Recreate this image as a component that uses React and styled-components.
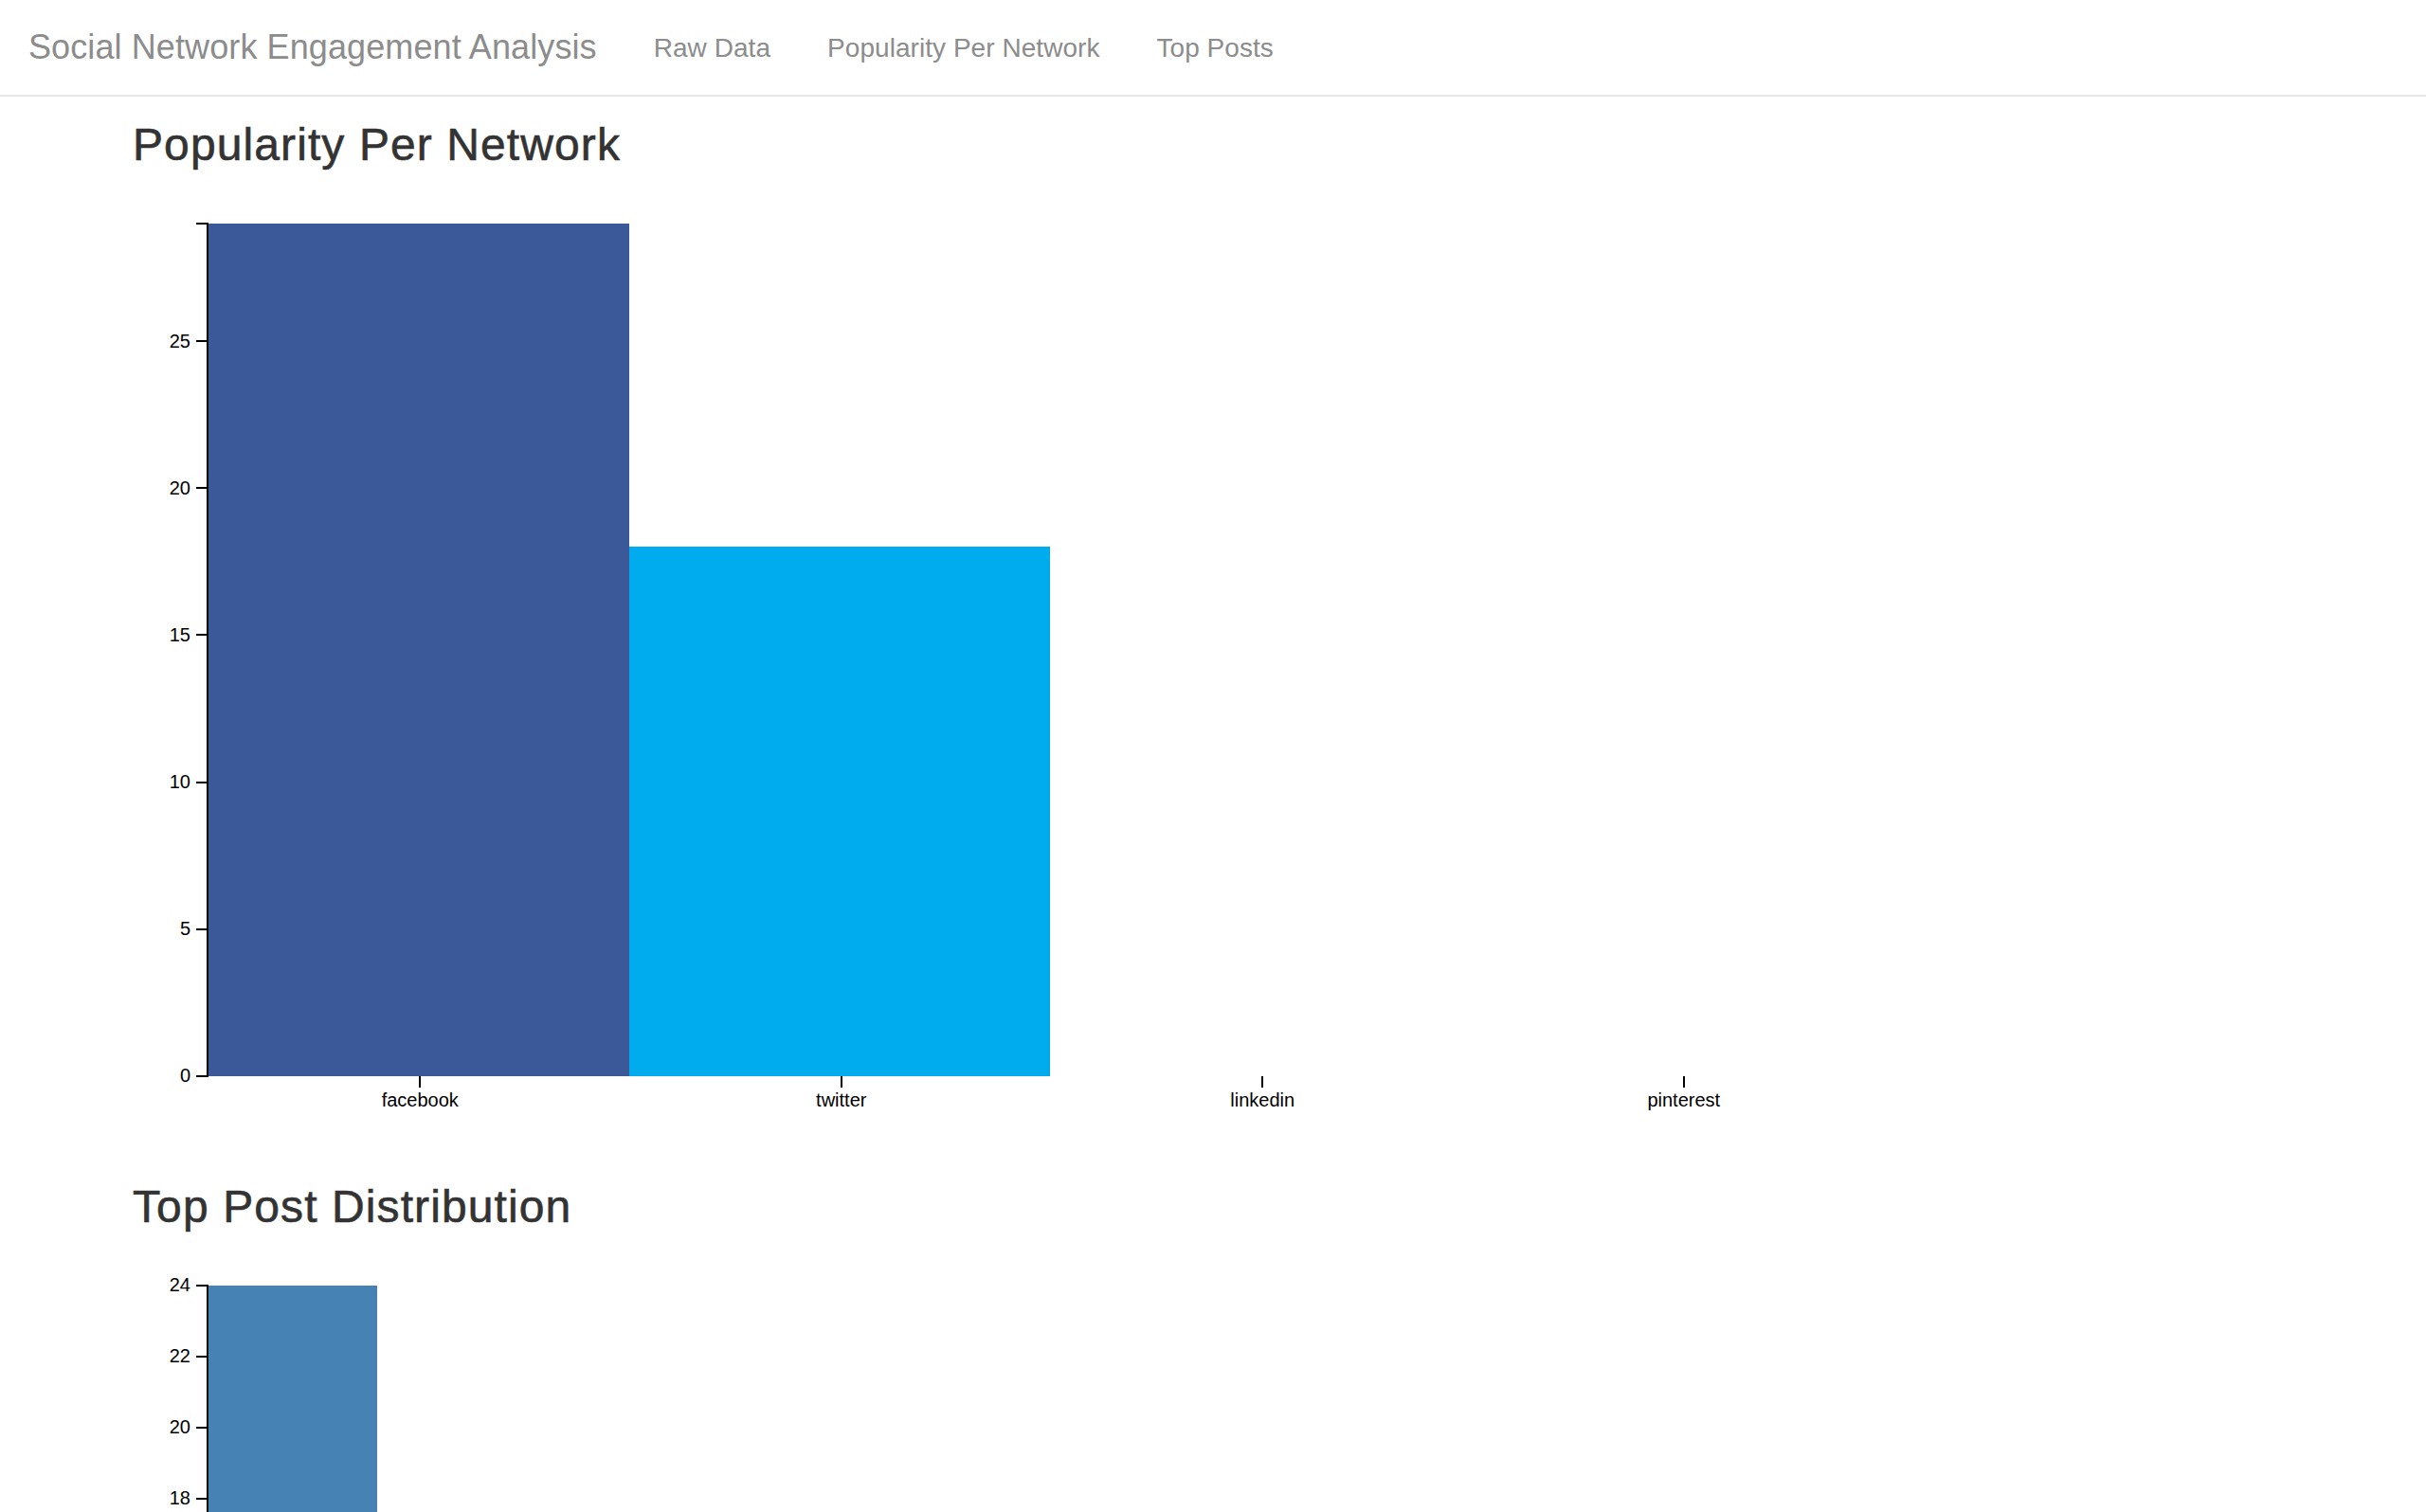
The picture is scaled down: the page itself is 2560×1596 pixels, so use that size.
import React from 'react';
import styled, { createGlobalStyle } from 'styled-components';

const GlobalStyle = createGlobalStyle`
  html, body {
    margin: 0;
    padding: 0;
    background: #fff;
  }
  body {
    font-family: "Liberation Sans", Helvetica, Arial, sans-serif;
    color: #333;
  }
`;

const Navbar = styled.nav`
  display: flex;
  align-items: flex-start;
  height: 100px;
  padding: 0 30px;
  border-bottom: 2px solid #e7e7e7;
  background: #fff;
`;

const Brand = styled.a`
  display: block;
  margin-left: -30px;
  padding: 30px;
  font-size: 36px;
  line-height: 40px;
  color: #8c8c8c;
  text-decoration: none;
  letter-spacing: 0.1px;
`;

const NavList = styled.ul`
  display: flex;
  margin: 0;
  padding: 0;
  list-style: none;
`;

const NavLink = styled.a`
  display: block;
  padding: 31px 30px 29px;
  font-size: 28px;
  line-height: 40px;
  color: #8c8c8c;
  text-decoration: none;
  letter-spacing: 0.05px;
`;

const Container = styled.main`
  display: flex;
  flex-direction: column;
  gap: 52px;
  padding: 25px 140px 0;
`;

const Section = styled.section`
  display: flex;
  flex-direction: column;
`;

const Heading = styled.h3`
  margin: 0 0 16px;
  font-size: 48px;
  line-height: 52.8px;
  font-weight: 500;
  color: #333;
  letter-spacing: 1.1px;
  -webkit-text-stroke: 0.6px #333;
`;

const ChartSvg = styled.svg`
  display: block;
  overflow: visible;
`;

const AxisPath = styled.path`
  fill: none;
  stroke: #000;
  stroke-width: 2px;
  shape-rendering: crispEdges;
`;

const TickLine = styled.line`
  stroke: #000;
  stroke-width: 2px;
  shape-rendering: crispEdges;
`;

const TickLabel = styled.text`
  font-family: "Liberation Sans", Helvetica, Arial, sans-serif;
  font-size: 20px;
  fill: #000;
`;

const Bar = styled.rect`
  fill: ${props => props.color};
  shape-rendering: crispEdges;
`;

const BarChart = ({ data, max, step, plotHeight, band, barWidth, left, tickLabels }) => {
  const y = v => plotHeight - (v / max) * plotHeight;
  const ticks = [];
  for (let v = 0; v <= max; v += step) ticks.push(v);
  const top = 40;

  return (
    <ChartSvg width={2280} height={top + plotHeight + 60}>
      <g transform={`translate(${left},${top})`}>
        {data.map((d, i) => (
          <Bar
            key={d.label}
            x={i * band}
            y={y(d.value)}
            width={barWidth}
            height={plotHeight - y(d.value)}
            color={d.color}
          />
        ))}
        <g>
          {ticks.map(v => (
            <g key={v} transform={`translate(0,${y(v)})`}>
              <TickLine x1={-12} x2={0} y1={0} y2={0} />
              <TickLabel x={-18} dy=".32em" textAnchor="end">{v}</TickLabel>
            </g>
          ))}
          <AxisPath d={`M-12,0H0V${plotHeight}H-12`} />
        </g>
        {tickLabels && (
          <g transform={`translate(0,${plotHeight})`}>
            {data.map((d, i) => (
              <g key={d.label} transform={`translate(${i * band + band / 2 + 2},0)`}>
                <TickLine x1={0} x2={0} y1={0} y2={12} />
                <TickLabel y={18} dy=".71em" textAnchor="middle">{d.label}</TickLabel>
              </g>
            ))}
          </g>
        )}
      </g>
    </ChartSvg>
  );
};

const networks = [
  { label: 'facebook', value: 29, color: '#3b5998' },
  { label: 'twitter', value: 18, color: '#00acee' },
  { label: 'linkedin', value: 0, color: '#007bb6' },
  { label: 'pinterest', value: 0, color: '#cb2027' },
];

const distribution = [24, 11, 6, 4, 3, 2, 1, 1, 0, 1].map((value, i) => ({
  label: String(i + 1),
  value,
  color: 'steelblue',
}));

const App = () => (
  <>
    <GlobalStyle />
    <Navbar>
      <Brand href="#">Social Network Engagement Analysis</Brand>
      <NavList>
        <li><NavLink href="#raw">Raw Data</NavLink></li>
        <li><NavLink href="#popularity">Popularity Per Network</NavLink></li>
        <li><NavLink href="#top">Top Posts</NavLink></li>
      </NavList>
    </Navbar>
    <Container>
      <Section id="popularity">
        <Heading>Popularity Per Network</Heading>
        <BarChart
          data={networks}
          max={29}
          step={5}
          plotHeight={900}
          band={444.5}
          barWidth={444.5}
          left={79}
          tickLabels
        />
      </Section>
      <Section id="top">
        <Heading>Top Post Distribution</Heading>
        <BarChart
          data={distribution}
          max={24}
          step={2}
          plotHeight={900}
          band={181}
          barWidth={179}
          left={79}
          tickLabels
        />
      </Section>
    </Container>
  </>
);

export default App;
